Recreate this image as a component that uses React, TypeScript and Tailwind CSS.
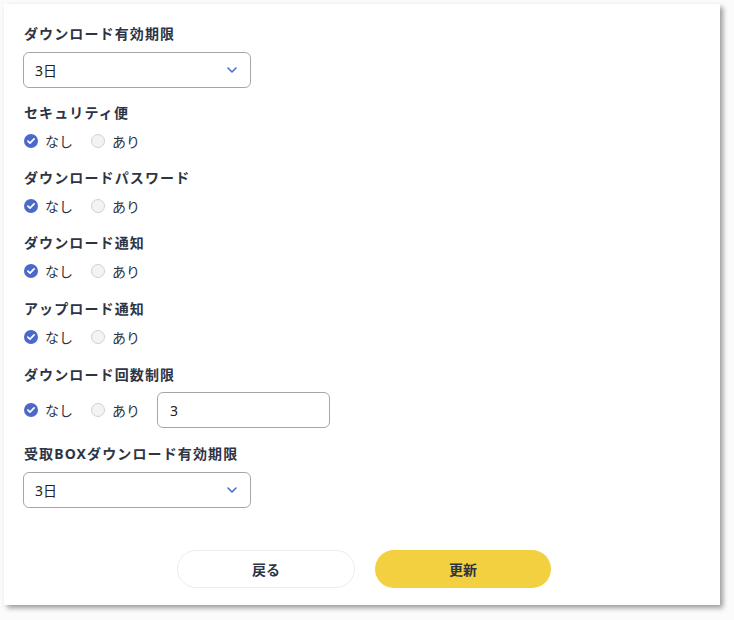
import React from "react";

const font = { fontFamily: '"Noto Sans", "Noto Sans CJK JP", sans-serif' };

function Chevron() {
  return (
    <svg width="12" height="8" viewBox="0 0 12 8" fill="none">
      <path d="M2 2l4 4 4-4" stroke="#4a6bd0" strokeWidth="1.6" strokeLinecap="round" strokeLinejoin="round" />
    </svg>
  );
}

function Select() {
  return (
    <div className="-ml-[1px] flex h-[36px] w-[228px] items-center justify-between rounded-[6px] border border-[#a3a7ad] bg-white pl-[11px] pr-[12px] text-[14px] text-[#222]">
      <span>3日</span>
      <Chevron />
    </div>
  );
}

function Checked() {
  return (
    <svg width="14" height="14" viewBox="0 0 14 14">
      <circle cx="7" cy="7" r="7" fill="#4b69c8" />
      <path d="M3.9 7.2l2.1 2 4.1-4.3" stroke="#fff" strokeWidth="1.7" fill="none" strokeLinecap="round" strokeLinejoin="round" />
    </svg>
  );
}

function Unchecked() {
  return <span className="block h-[14px] w-[14px] rounded-full border border-[#cfd1d5] bg-[#f2f3f5]" />;
}

function Radios() {
  return (
    <div className="flex h-[20px] items-center text-[14px] text-[#2d3340]">
      <Checked />
      <span className="ml-[7px]">なし</span>
      <span className="ml-[18px]"><Unchecked /></span>
      <span className="ml-[7px]">あり</span>
    </div>
  );
}

function Label({ children }: { children: React.ReactNode }) {
  return (
    <div className="h-[20px] text-[14px] font-bold leading-[20px] tracking-[0.08em] text-[#2d3444]">{children}</div>
  );
}

export default function App() {
  return (
    <div className="h-[620px] w-[734px] bg-[#fbfbfb] pl-[4px] pt-[4px]" style={font}>
      <div className="flex h-[601px] w-[716px] flex-col bg-white pl-[20px] pt-[20px] shadow-[3px_3px_5px_rgba(0,0,0,0.38)]">
        <Label>ダウンロード有効期限</Label>
        <div className="mt-[8px]"><Select /></div>

        <div className="mt-[15px]"><Label>セキュリティ便</Label></div>
        <div className="mt-[8px]"><Radios /></div>

        <div className="mt-[17px]"><Label>ダウンロードパスワード</Label></div>
        <div className="mt-[8px]"><Radios /></div>

        <div className="mt-[17px]"><Label>ダウンロード通知</Label></div>
        <div className="mt-[8px]"><Radios /></div>

        <div className="mt-[18px]"><Label>アップロード通知</Label></div>
        <div className="mt-[8px]"><Radios /></div>

        <div className="mt-[18px]"><Label>ダウンロード回数制限</Label></div>
        <div className="mt-[7px] flex items-center">
          <Radios />
          <div className="ml-[17px] flex h-[36px] w-[173px] items-center rounded-[6px] border border-[#a3a7ad] bg-white pl-[12px] text-[14px] text-[#222]">3</div>
        </div>

        <div className="mt-[16px]"><Label>受取BOXダウンロード有効期限</Label></div>
        <div className="mt-[8px]"><Select /></div>

        <div className="mt-[42px] flex gap-[20px] pl-[153px]">
          <div className="flex h-[38px] w-[178px] items-center justify-center rounded-full border border-[#ececee] bg-white text-[14px] font-bold text-[#2d3444]">戻る</div>
          <div className="flex h-[38px] w-[176px] items-center justify-center rounded-full bg-[#f3d040] text-[14px] font-bold text-[#2d3444]">更新</div>
        </div>
      </div>
    </div>
  );
}
